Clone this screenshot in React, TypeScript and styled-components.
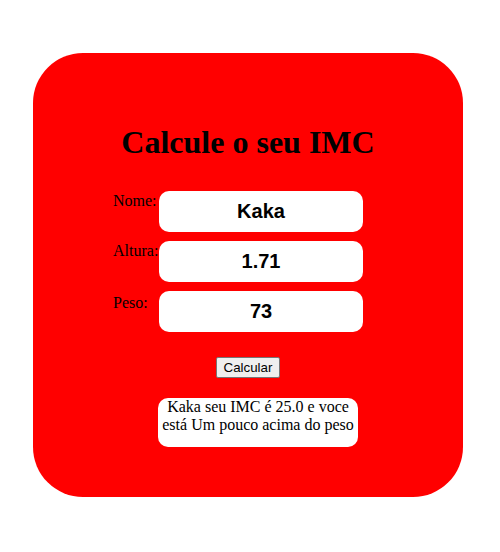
import React from 'react';
import styled, { createGlobalStyle } from 'styled-components';

const GlobalStyle = createGlobalStyle`
	html, body {
		margin: 0;
		padding: 0;
		background: #ffffff;
		font-family: 'Liberation Serif', 'Times New Roman', serif;
	}
`;

const Page = styled.div`
	padding: 53px 0 0 33px;
`;

const Card = styled.section`
	box-sizing: border-box;
	width: 430px;
	height: 444px;
	padding-top: 71px;
	background-color: #ff0000;
	border-radius: 50px;
	display: flex;
	flex-direction: column;
	align-items: center;
`;

const Title = styled.h1`
	margin: 0;
	font-size: 32px;
	line-height: 37px;
	font-weight: bold;
	color: #000;
`;

const Form = styled.div`
	align-self: flex-start;
	margin: 30px 0 0 80px;
	display: grid;
	grid-template-columns: 46px 204px;
	row-gap: 9px;
`;

const Label = styled.label<{ $drop?: number }>`
	font-size: 16px;
	line-height: 18px;
	color: #000;
	padding-top: ${props => props.$drop ?? 1}px;
`;

const Field = styled.input`
	box-sizing: border-box;
	width: 204px;
	height: 41px;
	border: 0;
	border-radius: 10px;
	background: #ffffff;
	text-align: center;
	font-family: 'Liberation Sans', Arial, sans-serif;
	font-size: 20px;
	font-weight: bold;
	color: #000;
	outline: none;
`;

const Button = styled.button`
	margin-top: 25px;
	height: 21px;
	padding: 1px 7px;
	font-family: 'Liberation Sans', Arial, sans-serif;
	font-size: 13.33px;
	color: #000;
	background: #efefef;
	border: 1px solid #767676;
	border-radius: 2px;
`;

const Result = styled.div`
	box-sizing: border-box;
	width: 200px;
	margin: 20px 0 0 20px;
	padding: 0 0 13px;
	background: #ffffff;
	border-radius: 10px;
	text-align: center;
	font-size: 16px;
	line-height: 18px;
	color: #000;
`;

const rows = [
	{ id: 'nome', text: 'Nome:', value: 'Kaka', drop: 1 },
	{ id: 'altura', text: 'Altura:', value: '1.71', drop: 1 },
	{ id: 'peso', text: 'Peso:', value: '73', drop: 3 },
];

const App = () => {
	return (
		<Page>
			<GlobalStyle />
			<Card>
				<Title>Calcule o seu IMC</Title>
				<Form>
					{rows.map(row => (
						<React.Fragment key={row.id}>
							<Label htmlFor={row.id} $drop={row.drop}>
								{row.text}
							</Label>
							<Field id={row.id} defaultValue={row.value} />
						</React.Fragment>
					))}
				</Form>
				<Button type="button">Calcular</Button>
				<Result>Kaka seu IMC é 25.0 e voce está Um pouco acima do peso</Result>
			</Card>
		</Page>
	);
};

export default App;
